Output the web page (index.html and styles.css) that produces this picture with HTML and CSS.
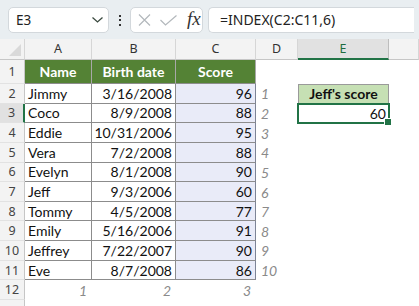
FILE: index.html
```html
<!DOCTYPE html>
<html lang="en">
<head>
  <meta charset="UTF-8">
  <meta name="viewport" content="width=device-width, initial-scale=1.0">
  <title>INDEX – Jeff's score</title>
  <link rel="stylesheet" href="styles.css">
</head>
<body>
  <div class="toolbar">
    <div class="namebox">
      <span>E3</span>
      <svg class="chev" width="11" height="6" viewBox="0 0 11 6"><path d="M0.5 0.5 L5.5 5 L10.5 0.5" fill="none" stroke="#3b4a40" stroke-width="1.3"/></svg>
    </div>
    <div class="dots"><i></i><i></i><i></i></div>
    <div class="fnbox">
      <svg width="13" height="12" viewBox="0 0 13 12"><path d="M1 0.5 L12 11.5 M12 0.5 L1 11.5" stroke="#b3b8bc" stroke-width="1.2" fill="none"/></svg>
      <svg width="17" height="11" viewBox="0 0 17 11"><path d="M0.5 5 L5.5 10 L16.5 0.5" stroke="#b3b8bc" stroke-width="1.2" fill="none"/></svg>
      <span class="fx">fx</span>
    </div>
    <div class="formula">=INDEX(C2:C11,6)</div>
  </div>

  <div class="sheet">
    <!-- column headers -->
    <div class="corner"><span class="tri"></span></div>
    <div class="ch">A</div>
    <div class="ch">B</div>
    <div class="ch">C</div>
    <div class="ch">D</div>
    <div class="ch sel">E</div>
    <div class="ch"></div>

    <!-- row 1 -->
    <div class="rh">1</div>
    <div class="t head">Name</div>
    <div class="t head">Birth date</div>
    <div class="t head">Score</div>
    <div class="c"></div>
    <div class="c"></div>
    <div class="c"></div>

    <div class="rh">2</div>
    <div class="t">Jimmy</div>
    <div class="t num">3/16/2008</div>
    <div class="t num sc">96</div>
    <div class="c idx">1</div>
    <div class="c label">Jeff's score</div>
    <div class="c"></div>

    <div class="rh sel">3</div>
    <div class="t">Coco</div>
    <div class="t num">8/9/2008</div>
    <div class="t num sc">88</div>
    <div class="c idx">2</div>
    <div class="c num active">60</div>
    <div class="c"></div>

    <div class="rh">4</div>
    <div class="t">Eddie</div>
    <div class="t num">10/31/2006</div>
    <div class="t num sc">95</div>
    <div class="c idx">3</div>
    <div class="c"></div>
    <div class="c"></div>

    <div class="rh">5</div>
    <div class="t">Vera</div>
    <div class="t num">7/2/2008</div>
    <div class="t num sc">88</div>
    <div class="c idx">4</div>
    <div class="c"></div>
    <div class="c"></div>

    <div class="rh">6</div>
    <div class="t">Evelyn</div>
    <div class="t num">8/1/2008</div>
    <div class="t num sc">90</div>
    <div class="c idx">5</div>
    <div class="c"></div>
    <div class="c"></div>

    <div class="rh">7</div>
    <div class="t">Jeff</div>
    <div class="t num">9/3/2006</div>
    <div class="t num sc">60</div>
    <div class="c idx">6</div>
    <div class="c"></div>
    <div class="c"></div>

    <div class="rh">8</div>
    <div class="t">Tommy</div>
    <div class="t num">4/5/2008</div>
    <div class="t num sc">77</div>
    <div class="c idx">7</div>
    <div class="c"></div>
    <div class="c"></div>

    <div class="rh">9</div>
    <div class="t">Emily</div>
    <div class="t num">5/16/2006</div>
    <div class="t num sc">91</div>
    <div class="c idx">8</div>
    <div class="c"></div>
    <div class="c"></div>

    <div class="rh">10</div>
    <div class="t">Jeffrey</div>
    <div class="t num">7/22/2007</div>
    <div class="t num sc">90</div>
    <div class="c idx">9</div>
    <div class="c"></div>
    <div class="c"></div>

    <div class="rh">11</div>
    <div class="t">Eve</div>
    <div class="t num">8/7/2008</div>
    <div class="t num sc">86</div>
    <div class="c idx">10</div>
    <div class="c"></div>
    <div class="c"></div>

    <div class="rh">12</div>
    <div class="c num idx">1</div>
    <div class="c num idx">2</div>
    <div class="c num idx">3</div>
    <div class="c"></div>
    <div class="c"></div>
    <div class="c"></div>

    <div class="rh"></div>
  </div>
</body>
</html>
```

FILE: styles.css
```css
* {
  box-sizing: border-box;
}
body {
  margin: 0;
  width: 419px;
  height: 306px;
  overflow: hidden;
  background: #fff;
  font-family: "Noto Sans", sans-serif;
}

/* formula bar */
.toolbar {
  height: 39px;
  background: #e9eef1;
  display: flex;
  align-items: flex-start;
  padding: 7px 0 0 8px;
}
.namebox {
  width: 101px;
  height: 26px;
  background: #fff;
  border: 1px solid #d3d8dc;
  border-radius: 5px;
  display: flex;
  align-items: center;
  justify-content: space-between;
  padding: 0 5px 0 7px;
  font-size: 13.5px;
  color: #222;
}
.dots {
  width: 21px;
  height: 26px;
  display: flex;
  flex-direction: column;
  align-items: center;
  justify-content: center;
  gap: 2.5px;
}
.dots i {
  width: 2px;
  height: 2px;
  background: #333;
}
.fnbox {
  width: 73px;
  height: 26px;
  background: #fff;
  border: 1px solid #d3d8dc;
  border-radius: 5px;
  display: flex;
  align-items: center;
  padding-left: 7px;
  gap: 9px;
}
.fx {
  font-family: "Liberation Serif", serif;
  font-style: italic;
  font-size: 19px;
  color: #333;
  margin-left: 1px;
  margin-top: -3px;
}
.formula {
  margin-left: 5px;
  width: 206px;
  height: 26px;
  background: #fff;
  border: 1px solid #d3d8dc;
  border-right: none;
  border-radius: 5px 0 0 5px;
  padding-left: 11px;
  line-height: 24px;
  font-size: 14px;
  color: #222;
}

/* grid */
.sheet {
  display: grid;
  grid-template-columns: 25px 67px 84px 80px 42px 91px 30px;
  grid-template-rows: 21px 24px repeat(10, 19.65px) 20px 20px;
  font-family: Lato, sans-serif;
  font-size: 14px;
  color: #111;
}
.corner {
  background: #f3f3f3;
  border-right: 1px solid #d6d6d6;
  border-bottom: 1px solid #c6c6c6;
  position: relative;
}
.tri {
  position: absolute;
  right: 3px;
  bottom: 3px;
  width: 0;
  height: 0;
  border-left: 12px solid transparent;
  border-bottom: 12px solid #d9d9d9;
}
.ch {
  background: #f3f3f3;
  border-right: 1px solid #d6d6d6;
  border-bottom: 1px solid #c6c6c6;
  font-family: "Noto Sans", sans-serif;
  font-size: 12.5px;
  color: #333;
  text-align: center;
  line-height: 20px;
}
.ch.sel {
  background: #e1e1e1;
  border-bottom: 2px solid #217346;
  border-right-color: #bdbdbd;
  color: #1d6b3f;
}
.rh {
  background: #f3f3f3;
  border-right: 1px solid #c6c6c6;
  border-bottom: 1px solid #e2e2e2;
  font-family: "Noto Sans", sans-serif;
  font-size: 12.5px;
  color: #444;
  display: flex;
  align-items: center;
  justify-content: center;
}
.rh.sel {
  background: #e1e1e1;
  border-right: 2px solid #217346;
}

.t, .c {
  display: flex;
  align-items: center;
  padding: 0 3px;
  white-space: nowrap;
}
.t {
  border-right: 1px solid #8c8c8c;
  border-bottom: 1px solid #8c8c8c;
}
.t.head {
  background: #548235;
  color: #fff;
  font-weight: bold;
  justify-content: center;
  border-right-color: #a8a8a8;
}
.num {
  justify-content: flex-end;
}
.sc {
  background: #e9ebf8;
  border-right-color: #7d8496;
}
.idx {
  color: #8a8a8a;
  font-style: italic;
  padding-left: 5px;
}
.num.idx {
  padding-right: 5px;
}
.label {
  background: #c6e0b4;
  border: 1px solid #9a9a9a;
  font-weight: bold;
  justify-content: center;
}
.active {
  border: 2px solid #217346;
  position: relative;
  margin: -1px;
  padding-right: 2px;
}
.active::after {
  content: "";
  position: absolute;
  right: -4px;
  bottom: -4px;
  width: 6px;
  height: 6px;
  background: #217346;
  border: 1px solid #fff;
}
```
